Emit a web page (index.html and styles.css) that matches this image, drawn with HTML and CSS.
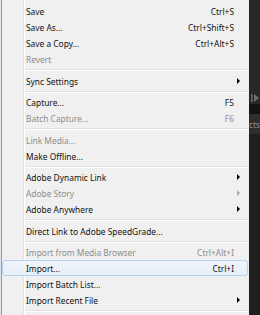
FILE: index.html
```html
<!DOCTYPE html>
<html lang="en">
<head>
    <meta charset="UTF-8">
    <title>File menu</title>
    <link rel="stylesheet" href="styles.css">
</head>
<body>
    <div class="screen">
        <div class="menu">
            <div class="item"><span class="label">Save</span><span class="key">Ctrl+S</span><span class="sub"></span></div>
            <div class="item"><span class="label">Save As...</span><span class="key">Ctrl+Shift+S</span><span class="sub"></span></div>
            <div class="item"><span class="label">Save a Copy...</span><span class="key">Ctrl+Alt+S</span><span class="sub"></span></div>
            <div class="item off"><span class="label">Revert</span><span class="key"></span><span class="sub"></span></div>
            <div class="sep"></div>
            <div class="item"><span class="label">Sync Settings</span><span class="key"></span><span class="sub arrow"></span></div>
            <div class="sep thin"></div>
            <div class="item"><span class="label">Capture...</span><span class="key">F5</span><span class="sub"></span></div>
            <div class="item off"><span class="label">Batch Capture...</span><span class="key">F6</span><span class="sub"></span></div>
            <div class="sep"></div>
            <div class="item off"><span class="label">Link Media...</span><span class="key"></span><span class="sub"></span></div>
            <div class="item"><span class="label">Make Offline...</span><span class="key"></span><span class="sub"></span></div>
            <div class="sep thin"></div>
            <div class="item"><span class="label">Adobe Dynamic Link</span><span class="key"></span><span class="sub arrow"></span></div>
            <div class="item off"><span class="label">Adobe Story</span><span class="key"></span><span class="sub arrow"></span></div>
            <div class="item"><span class="label">Adobe Anywhere</span><span class="key"></span><span class="sub arrow"></span></div>
            <div class="sep"></div>
            <div class="item"><span class="label">Direct Link to Adobe SpeedGrade...</span><span class="key"></span><span class="sub"></span></div>
            <div class="sep thin"></div>
            <div class="item off"><span class="label">Import from Media Browser</span><span class="key">Ctrl+Alt+I</span><span class="sub"></span></div>
            <div class="item hot"><span class="label">Import...</span><span class="key">Ctrl+I</span><span class="sub"></span></div>
            <div class="item"><span class="label">Import Batch List...</span><span class="key"></span><span class="sub"></span></div>
            <div class="item"><span class="label">Import Recent File</span><span class="key"></span><span class="sub arrow"></span></div>
            <div class="sep"></div>
        </div>
        <div class="behind">
            <div class="panel-top"></div>
            <div class="transport">
                <svg width="9" height="8" viewBox="0 0 9 8"><rect x="0" y="0" width="1.5" height="8" fill="#6e6e6e"/><path d="M3 0 L8 4 L3 8 Z" fill="#6e6e6e"/></svg>
            </div>
            <div class="panel-gap"></div>
            <div class="tab"><span>cts</span></div>
            <div class="panel-body"></div>
        </div>
    </div>
</body>
</html>
```

FILE: styles.css
```css
body, html {
    margin: 0;
    padding: 0;
    height: 100%;
    font-family: 'Noto Sans', sans-serif;
    font-size: 8.4px;
    background-color: #262626;
}
.screen {
    display: flex;
    height: 315px;
    overflow: hidden;
}
.menu {
    flex: none;
    width: 248px;
    margin-left: 1px;
    padding-top: 3px;
    border-left: 1px solid #9c9c9c;
    box-shadow: -1px 0 0 #e4e4e4;
    background: linear-gradient(to right, #f0f0f0 21px, #e2e3e3 21px, #e2e3e3 22px, #fff 22px, #fff 23px, #f0f0f0 23px);
    box-sizing: border-box;
}
.item {
    display: flex;
    align-items: center;
    height: 16px;
    margin: 0 1px 0 0;
    padding-left: 23px;
    color: #111;
    border: 1px solid transparent;
    border-radius: 3px;
    box-sizing: border-box;
}
.item.off {
    color: #8d8d8d;
}
.item.hot {
    background: linear-gradient(#f1f5fb, #e6eef9);
    border-color: #b5d2f5;
}
.label {
    flex: 1;
    white-space: nowrap;
}
.key {
    white-space: nowrap;
}
.sub {
    width: 13px;
    padding-left: 3px;
    display: flex;
    box-sizing: border-box;
}
.arrow::after {
    content: '';
    border-left: 3px solid #000;
    border-top: 3px solid transparent;
    border-bottom: 3px solid transparent;
}
.off .arrow::after {
    border-left-color: #a6a6a6;
}
.sep {
    height: 6px;
    margin-left: 23px;
    background: linear-gradient(transparent 2px, #e0e0e0 2px, #e0e0e0 3px, #fff 3px, #fff 4px, transparent 4px);
}
.sep.thin {
    height: 5px;
}
/* application behind the menu */
.behind {
    flex: 1;
    min-width: 0;
    display: flex;
    flex-direction: column;
}
.panel-top {
    height: 93px;
    background-color: #282828;
}
.transport {
    height: 11px;
    padding-left: 2px;
    background-color: #282828;
}
.panel-gap {
    height: 10px;
    background-color: #141414;
}
.tab {
    height: 20px;
    display: flex;
    justify-content: flex-end;
    align-items: center;
    overflow: hidden;
    color: #8c8c8c;
    background-color: #2e2e2e;
}
.panel-body {
    flex: 1;
    background-color: #1f1f1f;
}
```
